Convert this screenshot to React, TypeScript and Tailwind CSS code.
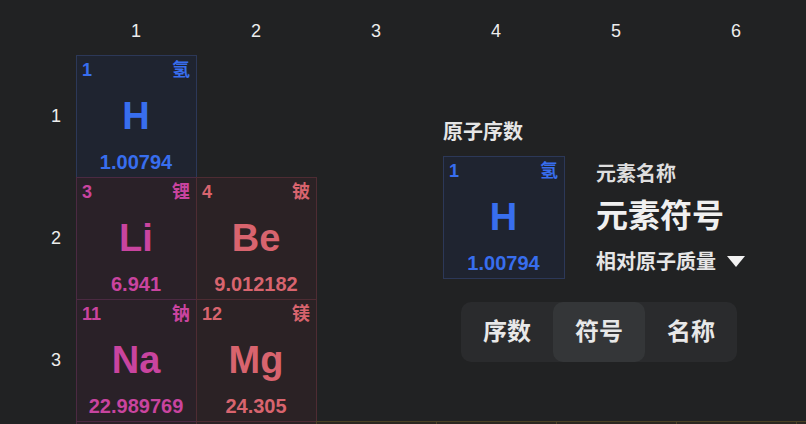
import React from "react";

type Cat = "h" | "alkali" | "alkaline" | "transition";

const catStyle: Record<Cat, string> = {
  h: "bg-[#1f2430] border-[#2c3858] text-[#386eee]",
  alkali: "bg-[#2a2128] border-[#4b2a42] text-[#c9449f]",
  alkaline: "bg-[#2b2225] border-[#4e2c33] text-[#d8646e]",
  transition: "bg-[#2a2720] border-[#4a4124] text-[#d6a63a]",
};

type El = { n: number; s: string; zh: string; w: string; r: number; c: number; cat: Cat };

const elements: El[] = [
  { n: 1, s: "H", zh: "氢", w: "1.00794", r: 1, c: 1, cat: "h" },
  { n: 3, s: "Li", zh: "锂", w: "6.941", r: 2, c: 1, cat: "alkali" },
  { n: 4, s: "Be", zh: "铍", w: "9.012182", r: 2, c: 2, cat: "alkaline" },
  { n: 11, s: "Na", zh: "钠", w: "22.989769", r: 3, c: 1, cat: "alkali" },
  { n: 12, s: "Mg", zh: "镁", w: "24.305", r: 3, c: 2, cat: "alkaline" },
];

// next row, only its top edge is inside the window
const nextRow: { c: number; cat: Cat }[] = [
  { c: 1, cat: "alkali" },
  { c: 2, cat: "alkaline" },
  { c: 3, cat: "transition" },
  { c: 4, cat: "transition" },
  { c: 5, cat: "transition" },
  { c: 6, cat: "transition" },
  { c: 7, cat: "transition" },
];

function Cell({ el, legend }: { el: El; legend?: boolean }) {
  return (
    <div
      className={`flex flex-col border pl-[5px] pr-[6px] pt-[3px] pb-[3px] ${
        legend ? "w-[122px] h-[123px]" : "w-[121px] h-[123px]"
      } ${catStyle[el.cat]}`}
    >
      <div className="flex justify-between text-[18px] font-bold leading-[22px]">
        <span>{el.n}</span>
        <span>{el.zh}</span>
      </div>
      <div className="flex flex-1 items-center justify-center text-[38px] font-bold leading-none">{el.s}</div>
      <div className="text-center text-[20px] font-bold leading-[24px]">{el.w}</div>
    </div>
  );
}

const cols = [1, 2, 3, 4, 5, 6];
const rows = [1, 2, 3];

export default function App() {
  const [mode, setMode] = React.useState("符号");
  return (
    <div
      className="w-screen h-screen overflow-hidden bg-[#212223] text-[#ededed]"
      style={{ fontFamily: '"Liberation Sans", "Noto Sans CJK SC", sans-serif' }}
    >
      <div className="grid grid-cols-[76px_repeat(7,120px)] grid-rows-[55px_repeat(4,122px)]">
        {cols.map((c) => (
          <div
            key={`h${c}`}
            style={{ gridColumnStart: c + 1, gridRowStart: 1 }}
            className="flex items-center justify-center pt-[7px] text-[18px]"
          >
            {c}
          </div>
        ))}
        {rows.map((r) => (
          <div
            key={`r${r}`}
            style={{ gridColumnStart: 1, gridRowStart: r + 1 }}
            className="flex items-center justify-center pl-[36px] text-[18px]"
          >
            {r}
          </div>
        ))}
        {elements.map((el) => (
          <div key={el.n} style={{ gridColumnStart: el.c + 1, gridRowStart: el.r + 1 }}>
            <Cell el={el} />
          </div>
        ))}
        {nextRow.map((x) => (
          <div key={`n${x.c}`} style={{ gridColumnStart: x.c + 1, gridRowStart: 5 }}>
            <div className={`w-[121px] h-[123px] border ${catStyle[x.cat]}`} />
          </div>
        ))}
        <div className="col-start-[5] col-span-[4] row-start-[2] row-span-[3] z-10 pl-[7px] pt-[63px]">
          <div className="text-[20px] font-bold leading-[28px] text-[#e6e6e6]">原子序数</div>
          <div className="mt-[10px] flex items-center gap-[31px]">
            <Cell el={elements[0]} legend />
            <div className="flex flex-col">
              <div className="text-[20px] font-bold leading-[28px] text-[#dedede]">元素名称</div>
              <div className="mt-[6px] text-[32px] font-bold leading-[44px] text-[#f0f0f0]">元素符号</div>
              <div className="mt-[10px] flex items-center gap-[11px] text-[20px] font-bold leading-[28px] text-[#e6e6e6]">
                <span>相对原子质量</span>
                <svg width="18" height="11" viewBox="0 0 18 11">
                  <polygon points="0,0 18,0 9,11" fill="#f2f2f2" />
                </svg>
              </div>
            </div>
          </div>
          <div className="ml-[18px] mt-[23px] flex w-[276px] h-[60px] rounded-[10px] bg-[#2a2b2d]">
            {["序数", "符号", "名称"].map((m) => (
              <button
                key={m}
                onClick={() => setMode(m)}
                className={`flex flex-1 items-center justify-center rounded-[10px] text-[24px] font-bold text-[#e8e8e8] ${
                  mode === m ? "bg-[#343638]" : ""
                }`}
              >
                {m}
              </button>
            ))}
          </div>
        </div>
      </div>
    </div>
  );
}
